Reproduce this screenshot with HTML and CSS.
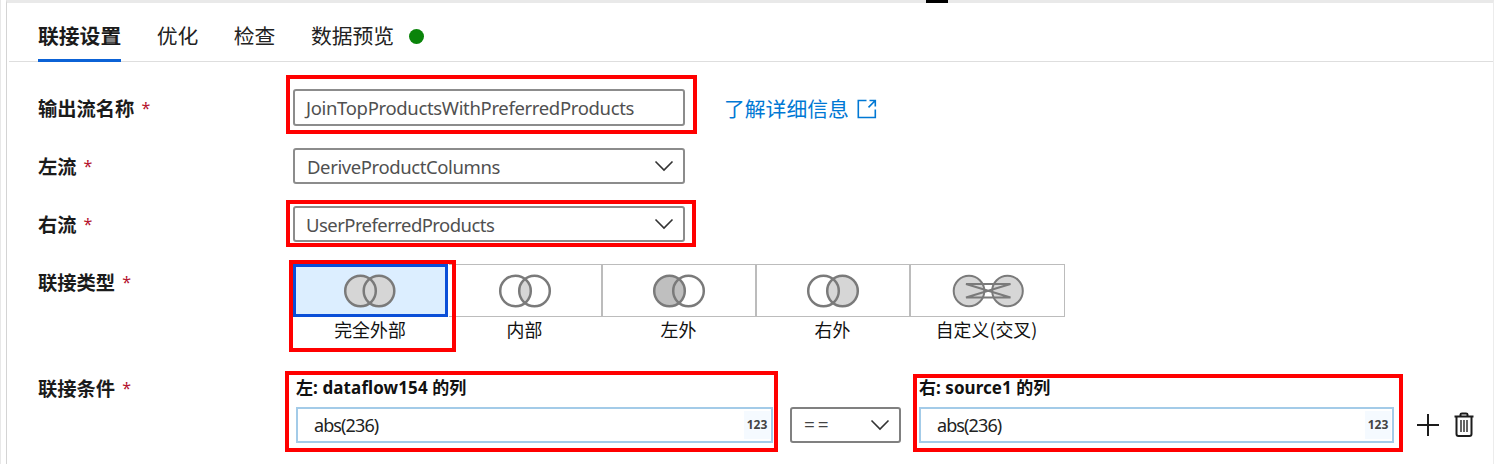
FILE: index.html
```html
<!DOCTYPE html>
<html lang="zh-CN">
<head>
<meta charset="utf-8">
<title>联接设置</title>
<link rel="stylesheet" href="styles.css">
</head>
<body>
<div class="screen">
  <div class="handle"></div>
  <main class="panel">
    <nav class="tabs">
      <div class="tab active">联接设置</div>
      <div class="tab">优化</div>
      <div class="tab">检查</div>
      <div class="tab">数据预览</div>
      <span class="status"></span>
    </nav>
    <section class="form">
      <div class="row">
        <div class="label">输出流名称<span class="req">*</span></div>
        <div class="field text-input"><span class="t-join">JoinTopProductsWithPreferredProducts</span></div>
        <a class="learn"><span>了解详细信息</span><svg width="20" height="20" viewBox="0 0 20 20"><path d="M9.5 1.5H1.3V18.5H18.3V10.5M12.5 1.5H18.3V7.4M18.3 1.5L11.5 8.4"/></svg></a>
      </div>
      <div class="row">
        <div class="label">左流<span class="req">*</span></div>
        <div class="field select"><span class="t-derive">DeriveProductColumns</span><svg class="chev" width="20" height="12" viewBox="0 0 20 12"><path d="M1.5 1.5L10 10L18.5 1.5"/></svg></div>
      </div>
      <div class="row">
        <div class="label">右流<span class="req">*</span></div>
        <div class="field"><span class="t-user">UserPreferredProducts</span><svg class="chev" width="20" height="12" viewBox="0 0 20 12"><path d="M1.5 1.5L10 10L18.5 1.5"/></svg></div>
      </div>
      <div class="row types">
        <div class="label">联接类型<span class="req">*</span></div>
        <div class="tiles">
          <div class="option">
            <div class="tile selected"><svg class="venn" width="54" height="36" viewBox="0 0 54 36"><g class="light"><circle cx="17.5" cy="18" r="15.3"/><circle cx="36" cy="18" r="15.3"/></g><circle cx="17.5" cy="18" r="15.3"/><circle cx="36" cy="18" r="15.3"/></svg></div>
            <div class="caption">完全外部</div>
          </div>
          <div class="option">
            <div class="tile"><svg class="venn" width="54" height="36" viewBox="0 0 54 36"><path class="light" d="M27 6A15.3 15.3 0 0 1 27 30A15.3 15.3 0 0 1 27 6Z"/><circle cx="17.5" cy="18" r="15.3"/><circle cx="36.5" cy="18" r="15.3"/></svg></div>
            <div class="caption">内部</div>
          </div>
          <div class="option">
            <div class="tile"><svg class="venn" width="54" height="36" viewBox="0 0 54 36"><circle class="dark" cx="17.5" cy="18" r="15.3"/><circle cx="17.5" cy="18" r="15.3"/><circle cx="36.5" cy="18" r="15.3"/></svg></div>
            <div class="caption">左外</div>
          </div>
          <div class="option">
            <div class="tile"><svg class="venn" width="54" height="36" viewBox="0 0 54 36"><circle class="light" cx="36.5" cy="18" r="15.3"/><circle cx="17.5" cy="18" r="15.3"/><circle cx="36.5" cy="18" r="15.3"/></svg></div>
            <div class="caption">右外</div>
          </div>
          <div class="option">
            <div class="tile"><svg class="venn cross" width="72" height="36" viewBox="0 0 72 36"><g class="light"><circle cx="17" cy="18" r="15.3"/><circle cx="55.5" cy="18" r="15.3"/></g><circle cx="17" cy="18" r="15.3"/><circle cx="55.5" cy="18" r="15.3"/><path d="M14 11H58.5L14 24.5H58.5Z"/></svg></div>
            <div class="caption">自定义(交叉)</div>
          </div>
        </div>
      </div>
      <div class="row conditions">
        <div class="label">联接条件<span class="req">*</span></div>
        <div class="column left">
          <div class="heading h-left">左: dataflow154 的列</div>
          <div class="expr"><span class="t-abs">abs(236)</span><span class="num">123</span></div>
        </div>
        <div class="operator"><span class="eq">==</span><svg class="chev" width="20" height="12" viewBox="0 0 20 12"><path d="M1.5 1.5L10 10L18.5 1.5"/></svg></div>
        <div class="column right">
          <div class="heading h-right">右: source1 的列</div>
          <div class="expr"><span class="t-abs">abs(236)</span><span class="num">123</span></div>
        </div>
        <svg class="add" width="24" height="24" viewBox="0 0 24 24"><path d="M12 1V23M1 12H23"/></svg>
        <svg class="trash" width="20" height="26" viewBox="0 0 20 26"><path d="M.5 4.5H19.5M6.5 4V2.5Q6.5 1.5 8 1.5H12Q13.5 1.5 13.5 2.5V4M2.5 5V22Q2.5 24 4.5 24H15.5Q17.5 24 17.5 22V5"/><path class="slats" d="M7 8V20M10 8V20M13 8V20"/></svg>
      </div>
    </section>
  </main>
  <div class="mark m1"></div>
  <div class="mark m2"></div>
  <div class="mark m3"></div>
  <div class="mark m4"></div>
  <div class="mark m5"></div>
</div>
</body>
</html>
```
FILE: styles.css
```css
* { box-sizing: border-box; }
body { margin: 0; background: #fff; font-family: "Noto Sans", "Noto Sans CJK SC", sans-serif; color: #222; }
svg { display: block; fill: none; flex: none; }
span { white-space: nowrap; }

.screen { position: relative; width: 1494px; height: 464px; overflow: hidden; padding-left: 5px; border-left: 1px solid #e8e8e8; }
.handle { position: absolute; left: 925px; top: 0; width: 22px; height: 3px; background: #000; }
.panel { height: 464px; border-left: 1px solid #d4d4d4; border-right: 1px solid #ececec; border-top: 3px solid #e9e9e9; }

.tabs { display: flex; height: 59px; margin-left: 2px; padding-left: 29px; border-bottom: 1px solid #dedede; gap: 35.5px; }
.tab { height: 59px; line-height: 64px; font-size: 20.8px; font-family: "Noto Sans CJK SC", sans-serif; white-space: nowrap; }
.tab.active { font-weight: 700; border-bottom: 3px solid #0b62d6; color: #1b1b1b; }
.status { width: 15px; height: 15px; border-radius: 50%; background: #0a840a; margin: 26px 0 0 -21px; }

.form { padding: 27px 0 0 31px; }
.row { display: flex; height: 58px; }
.label { display: flex; width: 255px; flex: none; height: 37px; font: 700 19.3px/38px "Noto Sans CJK SC", sans-serif; color: #1b1b1b; }
.req { margin-left: 7px; font: 400 16px/38px "Noto Sans", sans-serif; color: #b5122e; }
.field { width: 392px; height: 36px; margin-top: 1px; border: 2px solid #8c8c8c; border-radius: 3px; padding: 0 9px 0 11px; display: flex; align-items: center; justify-content: space-between; font-size: 18.5px; color: #505050; }
.text-input { height: 37px; margin-top: 0; }
.select { padding-left: 12px; }
.t-join { letter-spacing: -.34px; }
.t-derive { letter-spacing: -.4px; }
.t-user { letter-spacing: -.55px; }
.chev { stroke: #333; stroke-width: 1.6; }
.learn { display: flex; gap: 8px; margin-left: 39px; height: 37px; font: 400 20.8px/36px "Noto Sans CJK SC", sans-serif; color: #0078d4; align-items: center; white-space: nowrap; }
.learn svg { stroke: #0078d4; stroke-width: 1.6; margin-top: 3px; }

.types { height: 106px; }
.tiles { display: flex; margin-top: 1px; }
.option { width: 154px; }
.tile { width: 154px; height: 53px; border: 1px solid #bcbcbc; border-right-width: 2px; border-left: 0; display: flex; align-items: center; justify-content: center; position: relative; left: 2px; }
.option:last-child .tile { border-right-width: 1px; }
.tile.selected { width: 155px; border: 3px solid #0b4fd8; background: #dceeff; left: 0; }
.tile.selected .venn { margin-right: 2px; }
.venn { stroke: #7a7a7a; stroke-width: 2.5; }
.venn.cross { stroke-width: 2; }
.light { fill: #d6d6d6; stroke: none; }
.dark { fill: #bfbfbf; stroke: none; }
.caption { text-align: center; font: 400 17.9px/24px "Noto Sans CJK SC", sans-serif; color: #111; white-space: nowrap; }
.option + .option .caption { padding-left: 1px; }

.conditions { height: 80px; }
.column.left { width: 477px; margin-left: 3px; }
.column.right { width: 475px; }
.heading { height: 38px; line-height: 37px; font-size: 17px; font-weight: 700; color: #111; white-space: nowrap; }
.h-left { letter-spacing: .1px; }
.h-right { letter-spacing: .05px; }
.expr { height: 36px; border: 2px solid #a3cbe8; padding: 0 1px 0 16px; display: flex; align-items: center; justify-content: space-between; font-size: 18px; color: #222; }
.t-abs { letter-spacing: -.9px; }
.num { width: 26px; height: 28px; line-height: 28px; text-align: center; background: #f5faff; font-size: 12px; font-weight: 700; color: #444; }
.operator { width: 111px; height: 36px; margin: 38px 18px 0 17px; border: 2px solid #808080; border-radius: 3px; padding: 0 9px 0 12px; display: flex; align-items: center; justify-content: space-between; font-size: 19px; color: #444; }
.eq { letter-spacing: 3px; }
.add { margin: 44px 0 0 22px; stroke: #1c1c1c; stroke-width: 2; }
.trash { margin: 43px 0 0 14px; stroke: #1c1c1c; stroke-width: 2; }
.slats { stroke: #666; }

.mark { position: absolute; border: 4px solid #f00; }
.m1 { left: 285px; top: 75px; width: 411px; height: 59px; }
.m2 { left: 285px; top: 200px; width: 410px; height: 47px; }
.m3 { left: 288px; top: 260px; width: 167px; height: 92px; }
.m4 { left: 284px; top: 371px; width: 493px; height: 81px; }
.m5 { left: 912px; top: 374px; width: 490px; height: 78px; }
```
